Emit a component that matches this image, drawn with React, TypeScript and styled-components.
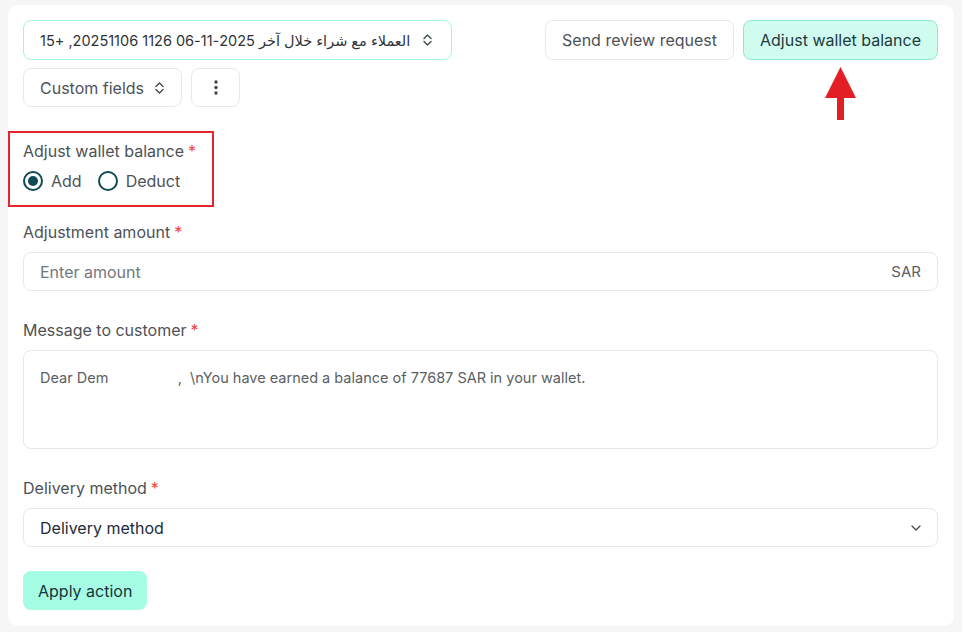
import React from "react";
import styled, { createGlobalStyle } from "styled-components";

const GlobalStyle = createGlobalStyle`
  html, body {
    margin: 0;
    padding: 0;
    background: #f6f6f6;
  }
  body {
    font-family: "Inter", "DejaVu Sans", sans-serif;
    color: #4a4f55;
  }
  * {
    box-sizing: border-box;
  }
`;

const Page = styled.div`
  padding: 5px 8px 6px;
`;

const Card = styled.div`
  background: #ffffff;
  border-radius: 10px;
  padding: 15px 16px 16px 15px;
  min-height: 621px;
`;

const Header = styled.div`
  display: flex;
  justify-content: space-between;
  align-items: flex-start;
`;

const HeaderLeft = styled.div`
  display: flex;
  flex-direction: column;
  gap: 8px;
  align-items: flex-start;
`;

const HeaderRow = styled.div`
  display: flex;
  gap: 9px;
`;

const OutlineButton = styled.button<{ $accent?: boolean; $square?: boolean }>`
  height: ${({ $accent }) => ($accent ? "40px" : "39px")};
  display: inline-flex;
  align-items: center;
  gap: ${({ $accent }) => ($accent ? "12px" : "10px")};
  padding: ${({ $square, $accent }) => ($square ? "0" : $accent ? "0 18px 0 16px" : "0 16px")};
  width: ${({ $square }) => ($square ? "49px" : "auto")};
  justify-content: center;
  background: #ffffff;
  border: 1px solid ${({ $accent }) => ($accent ? "#a9f3df" : "#e9e9e9")};
  border-radius: 8px;
  font-family: inherit;
  font-size: 16px;
  color: #4d5257;
  cursor: pointer;
`;

const SegmentText = styled.span`
  font-family: "Inter", "DejaVu Sans", sans-serif;
  font-size: 14.5px;
  color: #2e3338;
`;

const ActionButton = styled.button<{ $primary?: boolean }>`
  position: relative;
  height: 40px;
  padding: 0 16px;
  background: ${({ $primary }) => ($primary ? "#d0fcf0" : "#ffffff")};
  border: 1px solid ${({ $primary }) => ($primary ? "#88ead0" : "#e9e9e9")};
  border-radius: 8px;
  font-family: inherit;
  font-size: 16px;
  color: ${({ $primary }) => ($primary ? "#1d3a42" : "#4d5257")};
  cursor: pointer;
`;

const Arrow = styled.svg`
  position: absolute;
  top: 45px;
  left: 50%;
  margin-left: -17px;
  pointer-events: none;
`;

const Form = styled.div`
  display: flex;
  flex-direction: column;
  margin-top: 34px;
`;

const Field = styled.div<{ $space?: number }>`
  display: flex;
  flex-direction: column;
  gap: 10px;
  margin-top: ${({ $space }) => $space ?? 0}px;
`;

const Highlight = styled.div`
  position: relative;
  display: flex;
  flex-direction: column;
  gap: 10px;

  &::after {
    content: "";
    position: absolute;
    left: -15px;
    top: -10px;
    width: 202px;
    height: 72px;
    border: 2px solid #e3262b;
    pointer-events: none;
  }
`;

const Label = styled.label`
  font-size: 16px;
  line-height: 20px;
  color: #4d5257;
`;

const Required = styled.span`
  color: #ef4444;
  margin-left: 4px;
`;

const RadioGroup = styled.div`
  display: flex;
  align-items: center;
  gap: 16px;
  height: 20px;
`;

const RadioOption = styled.label`
  display: inline-flex;
  align-items: center;
  gap: 8px;
  font-size: 16px;
  color: #4d5257;
  cursor: pointer;
`;

const RadioDot = styled.span<{ $checked?: boolean }>`
  width: 20px;
  height: 20px;
  border-radius: 50%;
  border: 2px solid #0e4a57;
  display: inline-flex;
  align-items: center;
  justify-content: center;

  &::after {
    content: "";
    width: 10px;
    height: 10px;
    border-radius: 50%;
    background: ${({ $checked }) => ($checked ? "#0e4a57" : "transparent")};
  }
`;

const InputBox = styled.div`
  height: 39px;
  display: flex;
  align-items: center;
  justify-content: space-between;
  padding: 0 16px;
  border: 1px solid #e8e8e8;
  border-radius: 8px;
  background: #ffffff;
`;

const Placeholder = styled.span`
  font-size: 16px;
  color: #73787d;
`;

const Suffix = styled.span`
  font-size: 15px;
  color: #5b6066;
`;

const MessageArea = styled.textarea`
  height: 99px;
  resize: none;
  padding: 17px 16px;
  border: 1px solid #e8e8e8;
  border-radius: 8px;
  font-family: "Inter", sans-serif;
  font-size: 14.5px;
  line-height: 20px;
  color: #5a5f64;
  outline: none;
`;

const SelectBox = styled(InputBox)`
  cursor: pointer;
`;

const SelectValue = styled.span`
  font-size: 16px;
  color: #1e2b38;
`;

const ApplyButton = styled.button`
  align-self: flex-start;
  margin-top: 24px;
  height: 39px;
  padding: 0 15px;
  border: none;
  border-radius: 8px;
  background: #a5fde3;
  font-family: inherit;
  font-size: 16px;
  color: #16343c;
  cursor: pointer;
`;

const UpDown = () => (
  <svg width="11" height="14" viewBox="0 0 11 14" fill="none">
    <path d="M2 5.5 L5.5 2 L9 5.5 M2 8.5 L5.5 12 L9 8.5" stroke="#3f4a52" strokeWidth="1.4" strokeLinecap="round" strokeLinejoin="round" />
  </svg>
);

const ChevronDown = () => (
  <svg width="10" height="6" viewBox="0 0 10 6" fill="none">
    <path d="M1 1 L5 5 L9 1" stroke="#3f4a52" strokeWidth="1.3" strokeLinecap="round" strokeLinejoin="round" />
  </svg>
);

const Kebab = () => (
  <svg width="4" height="15" viewBox="0 0 4 15">
    <circle cx="2" cy="2" r="1.7" fill="#3f4650" />
    <circle cx="2" cy="7.5" r="1.7" fill="#3f4650" />
    <circle cx="2" cy="13" r="1.7" fill="#3f4650" />
  </svg>
);

const message = "Dear Dem                 ,  \\nYou have earned a balance of 77687 SAR in your wallet.";

export default function App() {
  return (
    <Page>
      <GlobalStyle />
      <Card>
        <Header>
          <HeaderLeft>
            <OutlineButton $accent>
              <SegmentText dir="rtl">العملاء مع شراء خلال آخر 2025-11-06 1126 20251106, +15</SegmentText>
              <UpDown />
            </OutlineButton>
            <HeaderRow>
              <OutlineButton>
                Custom fields
                <UpDown />
              </OutlineButton>
              <OutlineButton $square>
                <Kebab />
              </OutlineButton>
            </HeaderRow>
          </HeaderLeft>
          <HeaderRow>
            <ActionButton>Send review request</ActionButton>
            <ActionButton $primary>
              Adjust wallet balance
              <Arrow width="34" height="56" viewBox="0 0 34 56">
                <polygon points="16.5,1 1,32 32,32" fill="#e31e24" />
                <rect x="13" y="31" width="7" height="23" fill="#e31e24" />
              </Arrow>
            </ActionButton>
          </HeaderRow>
        </Header>

        <Form>
          <Highlight>
            <Label>
              Adjust wallet balance<Required>*</Required>
            </Label>
            <RadioGroup>
              <RadioOption>
                <RadioDot $checked />
                Add
              </RadioOption>
              <RadioOption>
                <RadioDot />
                Deduct
              </RadioOption>
            </RadioGroup>
          </Highlight>

          <Field $space={31}>
            <Label>
              Adjustment amount<Required>*</Required>
            </Label>
            <InputBox>
              <Placeholder>Enter amount</Placeholder>
              <Suffix>SAR</Suffix>
            </InputBox>
          </Field>

          <Field $space={29}>
            <Label>
              Message to customer<Required>*</Required>
            </Label>
            <MessageArea readOnly value={message} />
          </Field>

          <Field $space={29}>
            <Label>
              Delivery method<Required>*</Required>
            </Label>
            <SelectBox>
              <SelectValue>Delivery method</SelectValue>
              <ChevronDown />
            </SelectBox>
          </Field>

          <ApplyButton>Apply action</ApplyButton>
        </Form>
      </Card>
    </Page>
  );
}
